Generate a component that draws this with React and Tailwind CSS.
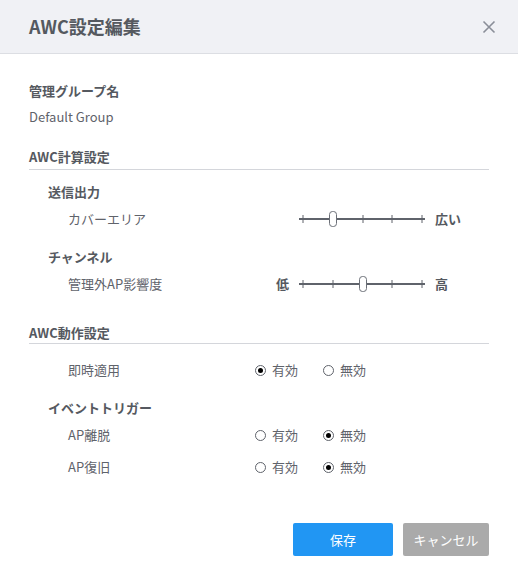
import React, { useState } from "react";

const FONT = { fontFamily: "'Noto Sans CJK JP', 'Noto Sans', sans-serif" };

// Stepped slider — 5 ticks, thumb sits on one of them
function StepSlider({ value }) {
  const ticks = [5, 35, 65, 94, 124];
  const x = ticks[value];
  return (
    <svg width="130" height="20" viewBox="0 0 130 20" className="block">
      <line x1="1" y1="10" x2="127" y2="10" stroke="#5f636b" strokeWidth="2" />
      {ticks.map((t) => (
        <line key={t} x1={t} y1="6" x2={t} y2="14" stroke="#5f636b" strokeWidth="1" />
      ))}
      <rect x={x - 3.5} y="2.5" width="7" height="15" rx="3" fill="#fff" stroke="#6b6f77" strokeWidth="1" />
    </svg>
  );
}

function Radio({ checked, label, onClick }) {
  return (
    <button type="button" onClick={onClick} className="flex items-center gap-[6px] text-[13px] leading-[20px] text-[#5f636b]">
      <span className="w-[11px] h-[11px] rounded-full border border-[#5f636b] bg-white flex items-center justify-center">
        {checked && <span className="w-[5px] h-[5px] rounded-full bg-black" />}
      </span>
      {label}
    </button>
  );
}

function RadioRow({ label, value, onChange, className = "" }) {
  return (
    <div className={`flex items-center pl-[39px] ${className}`}>
      <div className="w-[187px] text-[13px] leading-[20px] text-[#5f636b]">{label}</div>
      <div className="flex items-center gap-[25px]">
        <Radio checked={value} label="有効" onClick={() => onChange(true)} />
        <Radio checked={!value} label="無効" onClick={() => onChange(false)} />
      </div>
    </div>
  );
}

export default function App() {
  const [instant, setInstant] = useState(true);
  const [leave, setLeave] = useState(false);
  const [recover, setRecover] = useState(false);

  return (
    <div className="w-[518px] h-[581px] bg-white flex flex-col" style={FONT}>
      <div className="h-[54px] bg-[#f0f1f5] border-b border-[#dcdee3] flex items-center justify-between pl-[29px] pr-[22px]">
        <h2 className="text-[18px] font-bold text-[#555960]">AWC設定編集</h2>
        <svg width="14" height="14" viewBox="0 0 14 14">
          <path d="M1.5 1.5L12.5 12.5M12.5 1.5L1.5 12.5" stroke="#8a8e98" strokeWidth="1.6" />
        </svg>
      </div>

      <div className="px-[29px] flex flex-col">
        <div className="mt-[27px] text-[13px] leading-[20px] font-bold text-[#555960]">管理グループ名</div>
        <div className="mt-[6px] text-[13px] leading-[20px] text-[#5f636b]">Default Group</div>

        <div className="mt-[20px] pb-[2px] border-b border-[#d4d6db] text-[13px] leading-[20px] font-bold text-[#555960]">AWC計算設定</div>

        <div className="mt-[12px] pl-[19px] text-[13px] leading-[20px] font-bold text-[#555960]">送信出力</div>
        <div className="mt-[7px] flex items-center pl-[39px] h-[20px]">
          <div className="w-[208px] text-[13px] leading-[20px] text-[#5f636b]">カバーエリア</div>
          <div className="w-[22px]" />
          <StepSlider value={1} />
          <div className="ml-[7px] text-[13px] leading-[20px] font-bold text-[#555960]">広い</div>
        </div>

        <div className="mt-[18px] pl-[19px] text-[13px] leading-[20px] font-bold text-[#555960]">チャンネル</div>
        <div className="mt-[7px] flex items-center pl-[39px] h-[20px]">
          <div className="w-[208px] text-[13px] leading-[20px] text-[#5f636b]">管理外AP影響度</div>
          <div className="w-[22px] text-[13px] leading-[20px] font-bold text-[#555960]">低</div>
          <StepSlider value={2} />
          <div className="ml-[7px] text-[13px] leading-[20px] font-bold text-[#555960]">高</div>
        </div>

        <div className="mt-[29px] border-b border-[#d4d6db] text-[13px] leading-[20px] font-bold text-[#555960]">AWC動作設定</div>

        <RadioRow className="mt-[16px]" label="即時適用" value={instant} onChange={setInstant} />

        <div className="mt-[18px] pl-[19px] text-[13px] leading-[20px] font-bold text-[#555960]">イベントトリガー</div>
        <RadioRow className="mt-[7px]" label="AP離脱" value={leave} onChange={setLeave} />
        <RadioRow className="mt-[12px]" label="AP復旧" value={recover} onChange={setRecover} />

        <div className="mt-[46px] flex justify-end gap-[10px]">
          <button className="w-[100px] h-[33px] rounded-[2px] bg-[#2196f3] text-white text-[13px]">保存</button>
          <button className="w-[86px] h-[33px] rounded-[2px] bg-[#aaaaaa] text-white text-[13px]">キャンセル</button>
        </div>
      </div>
    </div>
  );
}
